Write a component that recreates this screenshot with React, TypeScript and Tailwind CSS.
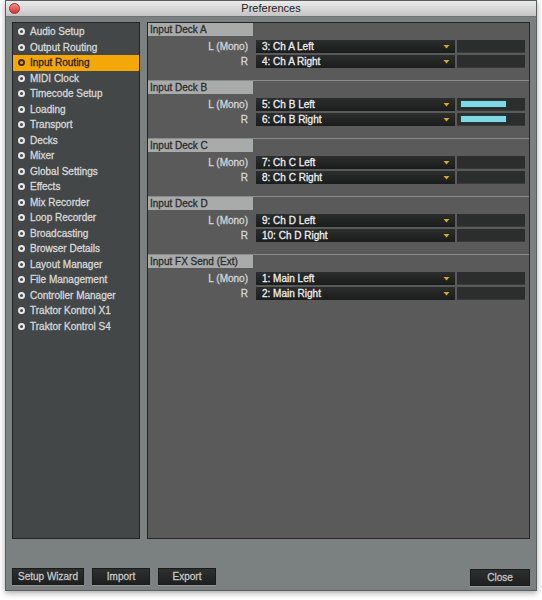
import React from 'react';

const font = { fontFamily: '"Liberation Sans", Arial, sans-serif' };

const navItems = [
  'Audio Setup', 'Output Routing', 'Input Routing', 'MIDI Clock', 'Timecode Setup',
  'Loading', 'Transport', 'Decks', 'Mixer', 'Global Settings', 'Effects',
  'Mix Recorder', 'Loop Recorder', 'Broadcasting', 'Browser Details',
  'Layout Manager', 'File Management', 'Controller Manager',
  'Traktor Kontrol X1', 'Traktor Kontrol S4',
];

const sections = [
  { title: 'Input Deck A', l: '3: Ch A Left', r: '4: Ch A Right', meter: false },
  { title: 'Input Deck B', l: '5: Ch B Left', r: '6: Ch B Right', meter: true },
  { title: 'Input Deck C', l: '7: Ch C Left', r: '8: Ch C Right', meter: false },
  { title: 'Input Deck D', l: '9: Ch D Left', r: '10: Ch D Right', meter: false },
  { title: 'Input FX Send (Ext)', l: '1: Main Left', r: '2: Main Right', meter: false },
];

// slightly heavier than regular, lighter than bold, like the original UI font
const txt = 'text-[10px] [-webkit-text-stroke:0.3px_currentColor]';

function Arrow() {
  return (
    <svg width="7" height="5" viewBox="0 0 7 5" className="mr-[5px]">
      <path d="M0.5 1 L6.5 1 L3.5 4.5 Z" fill="#d9a52a" />
    </svg>
  );
}

function Row({ label, value, meter }: { label: string; value: string; meter: boolean }) {
  return (
    <div className="flex h-[13px] items-center">
      <div className={`w-[103px] pr-[3px] text-right text-[#d4d6d6] ${txt}`}>{label}</div>
      <div className="ml-[5px] flex h-[13px] w-[199px] items-center justify-between bg-gradient-to-b from-[#2c2d2d] to-[#1b1c1c]">
        <span className={`pl-[6px] text-[#eeeeee] ${txt}`}>{value}</span>
        <Arrow />
      </div>
      <div className="ml-[2px] flex h-[13px] w-[68px] items-center border-b border-[#3a3a3a] bg-[#2c2e2e] pl-[3px]">
        {meter && <div className="h-[8px] w-[47px] border border-[#1e3a3c] bg-[#80d9e2]" />}
      </div>
    </div>
  );
}

export default function App() {
  return (
    <div className="h-[600px] w-[542px] bg-white px-[5px]" style={font}>
      <div className="flex h-[591px] w-[532px] flex-col border border-[#5c5f5f] shadow-[0_2px_6px_rgba(0,0,0,0.35)]">
        {/* Title bar */}
        <div className="relative flex h-[16px] items-center justify-center border-b border-[#6f7373] bg-gradient-to-b from-[#ececec] to-[#c4c4c4]">
          <div className="absolute left-[3px] top-[2px] h-[11px] w-[11px] rounded-full border border-[#a83030] bg-gradient-to-b from-[#f08a8a] to-[#d42a2a]" />
          <span className="text-[11px] text-[#222222]">Preferences</span>
        </div>

        {/* Body */}
        <div className="flex flex-1 flex-col bg-[#7b8080] px-[6px] pt-[5px]">
          <div className="flex h-[517px] gap-[7px]">
            {/* Sidebar */}
            <div className="w-[128px] border border-[#222424] bg-[#444748] pt-[1px]">
              {navItems.map((item) => {
                const active = item === 'Input Routing';
                return (
                  <div
                    key={item}
                    className={`flex h-[15.5px] items-center gap-[5px] pl-[5px] ${txt} ${active ? 'bg-[#f3a708] text-[#2a2000]' : 'text-[#d6d8d8]'}`}
                  >
                    <span className={`h-[7px] w-[7px] rounded-full border-2 ${active ? 'border-[#3a2a00]' : 'border-[#e8e8e8]'}`} />
                    {item}
                  </div>
                );
              })}
            </div>

            {/* Main panel */}
            <div className="flex-1 border border-[#242626] bg-[#5a5a5a]">
              {sections.map((s, i) => (
                <div
                  key={s.title}
                  className={`flex flex-col pb-[12px] ${i < sections.length - 1 ? 'border-b border-[#8a8c8c]' : ''}`}
                >
                  <div className={`flex h-[13px] w-[105px] items-center bg-[#a9abab] pl-[2px] text-[#2b2d2d] ${txt}`}>
                    {s.title}
                  </div>
                  <div className="flex flex-col gap-[2px] pt-[4px]">
                    <Row label="L (Mono)" value={s.l} meter={s.meter} />
                    <Row label="R" value={s.r} meter={s.meter} />
                  </div>
                </div>
              ))}
            </div>
          </div>

          {/* Footer buttons */}
          <div className="mt-[29px] flex items-start">
            {['Setup Wizard', 'Import', 'Export'].map((b, i) => (
              <button
                key={b}
                className={`h-[17px] border border-[#1a1b1b] bg-gradient-to-b from-[#2e3030] to-[#1e2020] text-[#c4c6c6] shadow-[0_1px_0_rgba(255,255,255,0.2)] ${txt} ${i === 0 ? 'w-[72px]' : 'ml-[8px] w-[58px]'}`}
              >
                {b}
              </button>
            ))}
            <button className={`ml-auto mt-[1px] h-[17px] w-[60px] border border-[#1a1b1b] bg-gradient-to-b from-[#2e3030] to-[#1e2020] text-[#c4c6c6] shadow-[0_1px_0_rgba(255,255,255,0.2)] ${txt}`}>
              Close
            </button>
          </div>
        </div>
      </div>
    </div>
  );
}
